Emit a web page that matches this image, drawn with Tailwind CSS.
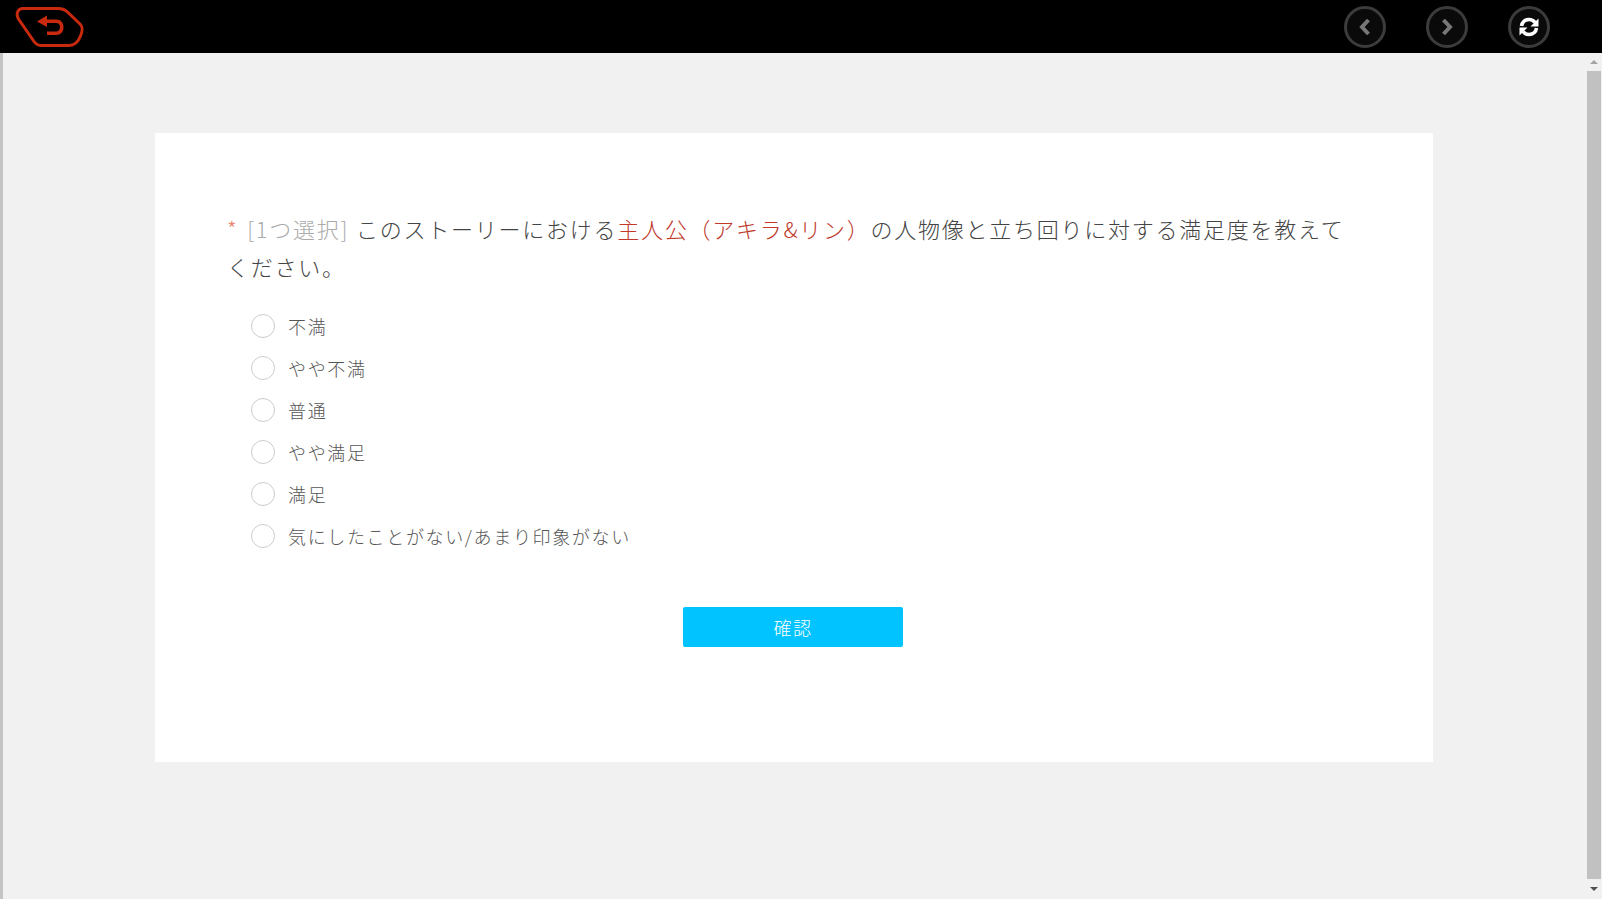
<!DOCTYPE html>
<html lang="ja">

<head>
    <meta charset="UTF-8">
    <meta name="viewport" content="width=device-width, initial-scale=1.0">
    <script src="https://cdn.jsdelivr.net/npm/@tailwindcss/browser@4"></script>
    <title>アンケート</title>
</head>

<body class="h-[899px] w-[1602px] overflow-hidden bg-[#f1f1f1] font-['Noto_Sans_CJK_JP',sans-serif] flex flex-col">
    <!-- Top bar -->
    <header class="h-[53px] shrink-0 bg-black flex items-center pl-[15px] pr-[52px]">
        <svg width="70" height="42" viewBox="0 0 70 42" fill="none">
            <path d="M8 2.5H43C48 2.5 50 3.5 53 6.5L65 18C68 21 68 24 65.5 30C63 36.5 60 39.5 54 39.5H27C23 39.5 21 38.5 19 35.5L3.5 13C0.5 7.5 3 2.5 8 2.5Z" stroke="#c92a0e" stroke-width="3" />
            <path d="M22 15.5L32 9.5V13.5H41C46 13.5 48.5 17 48.5 21C48.5 25.5 46 29 41 29H32V25.5H41C43.5 25.5 45 23.5 45 21C45 18.5 43.5 17 41 17H32V21Z" fill="#c92a0e" />
        </svg>
        <nav class="ml-auto flex gap-[40px]">
            <button class="size-[42px] rounded-full border-[3px] border-[#3c3c3c] bg-[#0a0a0a] flex items-center justify-center">
                <svg width="16" height="20" viewBox="0 0 16 20" fill="none"><path d="M11.5 3L5 10L11.5 17" stroke="#777" stroke-width="4" /></svg>
            </button>
            <button class="size-[42px] rounded-full border-[3px] border-[#3c3c3c] bg-[#0a0a0a] flex items-center justify-center">
                <svg width="16" height="20" viewBox="0 0 16 20" fill="none"><path d="M4.5 3L11 10L4.5 17" stroke="#777" stroke-width="4" /></svg>
            </button>
            <button class="size-[42px] rounded-full border-[3px] border-[#3c3c3c] bg-[#0a0a0a] flex items-center justify-center">
                <svg width="22" height="22" viewBox="0 0 22 22" fill="none">
                    <path d="M3.5 10C4 6 7 3.5 11 3.5C13.5 3.5 15.5 4.5 17 6.5" stroke="#fff" stroke-width="3.6" />
                    <path d="M20.5 2.5V10.5H12.5Z" fill="#fff" />
                    <path d="M18.5 12C18 16 15 18.5 11 18.5C8.5 18.5 6.5 17.5 5 15.5" stroke="#fff" stroke-width="3.6" />
                    <path d="M1.5 19.5V11.5H9.5Z" fill="#fff" />
                </svg>
            </button>
        </nav>
    </header>

    <div class="flex-1 flex min-h-0 border-l-[3px] border-[#c4c4c4]">
        <main class="flex-1 pt-[80px] pl-[152px] pr-[154px]">
            <section class="h-[629px] bg-white pt-[76px] pl-[72px] pr-[72px]">
                <h1 class="text-[22px] leading-[38px] tracking-[1.75px] font-light text-[#444]">
                    <span class="text-[#e8826a]">*</span>
                    <span class="text-[#aaa] ml-[2px]">[1つ選択]</span>
                    このストーリーにおける<span class="text-[#c0392b]">主人公（アキラ&amp;リン）</span>の人物像と立ち回りに対する満足度を教えてください。
                </h1>

                <ul class="mt-[20px] pl-[24px] flex flex-col text-[18px] tracking-[1.65px] font-light text-[#555]">
                    <li class="h-[42px] flex items-center gap-[13px]"><span class="size-[24px] rounded-full border border-[#ccc] bg-white"></span>不満</li>
                    <li class="h-[42px] flex items-center gap-[13px]"><span class="size-[24px] rounded-full border border-[#ccc] bg-white"></span>やや不満</li>
                    <li class="h-[42px] flex items-center gap-[13px]"><span class="size-[24px] rounded-full border border-[#ccc] bg-white"></span>普通</li>
                    <li class="h-[42px] flex items-center gap-[13px]"><span class="size-[24px] rounded-full border border-[#ccc] bg-white"></span>やや満足</li>
                    <li class="h-[42px] flex items-center gap-[13px]"><span class="size-[24px] rounded-full border border-[#ccc] bg-white"></span>満足</li>
                    <li class="h-[42px] flex items-center gap-[13px]"><span class="size-[24px] rounded-full border border-[#ccc] bg-white"></span>気にしたことがない/あまり印象がない</li>
                </ul>

                <div class="mt-[50px] flex justify-center">
                    <button class="ml-[-2px] w-[220px] h-[40px] rounded-[2px] bg-[#00c3ff] text-white text-[18px] tracking-[1.5px] font-light">確認</button>
                </div>
            </section>
        </main>

        <!-- Scrollbar -->
        <aside class="w-[14px] mr-[1px] shrink-0 flex flex-col items-center">
            <div class="h-[18px] flex items-center justify-center">
                <span class="border-x-[4px] border-x-transparent border-b-[4px] border-b-[#a3a3a3]"></span>
            </div>
            <div class="w-full flex-1 bg-[#c1c1c1]"></div>
            <div class="h-[20px] flex items-center justify-center">
                <span class="border-x-[4px] border-x-transparent border-t-[4px] border-t-[#505050]"></span>
            </div>
        </aside>
    </div>
</body>

</html>
